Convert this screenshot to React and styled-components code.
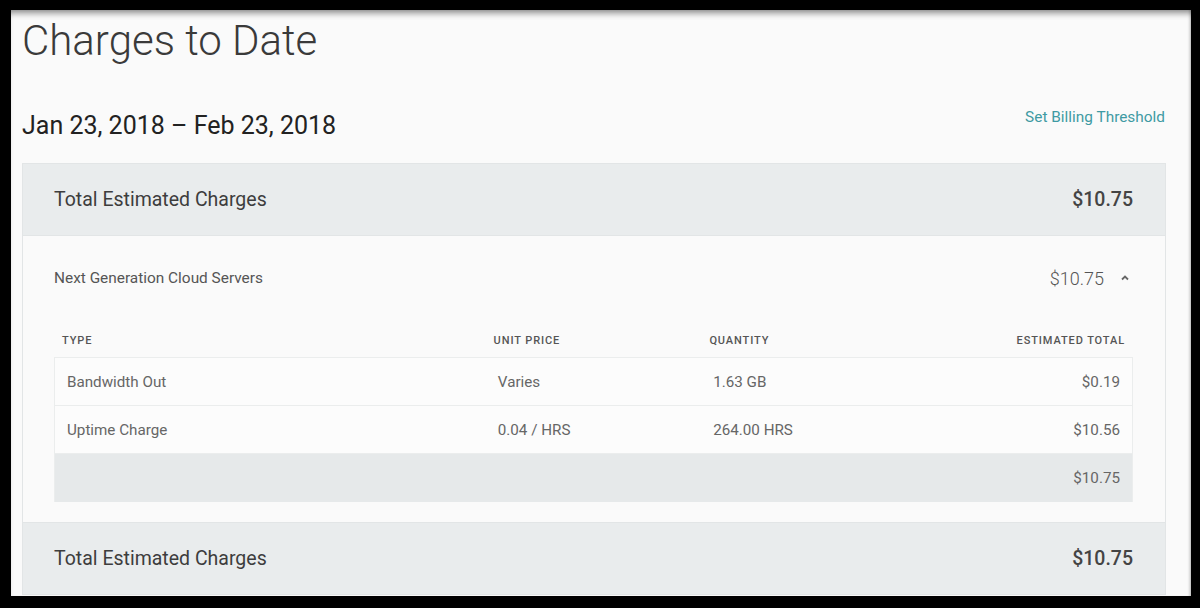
import React from "react";
import styled, { createGlobalStyle } from "styled-components";

const GlobalStyle = createGlobalStyle`
  html, body {
    margin: 0;
    padding: 0;
    background: #000;
    font-family: Roboto, "Liberation Sans", Arial, sans-serif;
  }
`;

const Frame = styled.div`
  height: 608px;
  box-sizing: border-box;
  padding: 10px 9px 12px 11px;
  background: #000;
`;

const Panel = styled.div`
  height: 100%;
  box-sizing: border-box;
  background: #fafafa;
  overflow: hidden;
  padding: 0 25px 0 11px;
  box-shadow: inset 0 7px 6px -4px rgba(0, 0, 0, 0.45), inset -3px 0 3px -2px rgba(0, 0, 0, 0.25);
`;

const Title = styled.h1`
  margin: 0;
  padding-top: 6px;
  font-size: 42px;
  line-height: 50px;
  font-weight: 300;
  color: #3a3a3a;
`;

const DateRow = styled.div`
  display: flex;
  justify-content: space-between;
  align-items: flex-start;
  margin-top: 45px;
  margin-right: 1px;
`;

const Period = styled.div`
  font-size: 25px;
  line-height: 30px;
  color: #222;
`;

const Link = styled.a`
  font-size: 15.4px;
  line-height: 18px;
  color: #3f9aa3;
  margin-top: -3px;
  cursor: pointer;
`;

const Card = styled.div`
  margin-top: 22px;
  border: 1px solid #e2e5e6;
  border-bottom: none;
`;

const Band = styled.div`
  display: flex;
  justify-content: space-between;
  align-items: center;
  height: 71px;
  padding: 0 32px 0 31px;
  background: #e9eced;
  border-bottom: 1px solid #e2e5e6;
  font-size: 19.5px;
  color: #3d3d3d;
`;

const BandTotal = styled.span`
  font-weight: 500;
  color: #444;
`;

const Section = styled.div`
  padding: 32px 32px 20px 31px;
  background: #fafafa;
  border-bottom: 1px solid #e2e5e6;
`;

const ServiceRow = styled.div`
  display: flex;
  justify-content: space-between;
  align-items: center;
  height: 20px;
  font-size: 15.4px;
  color: #555;
`;

const ServiceTotal = styled.div`
  display: flex;
  align-items: center;
  gap: 15px;
  font-size: 18px;
  font-weight: 300;
  color: #555;
`;

const Chevron = styled.svg`
  width: 12px;
  height: 12px;
  margin-right: 2px;
`;

const Table = styled.div`
  margin-top: 35px;
`;

const Row = styled.div`
  display: grid;
  grid-template-columns: 40% 20% 20% 20%;
  align-items: center;
  height: ${(p) => p.$h || 47}px;
  box-sizing: border-box;
  background: ${(p) => (p.$head ? "transparent" : p.$total ? "#e6e9ea" : "#fcfcfc")};
  border: ${(p) => (p.$head ? "none" : "1px solid #ebeded")};
  border-top: none;
  border-bottom: ${(p) => (p.$head ? "1px solid #ebeded" : p.$total ? "none" : "1px solid #ebeded")};
`;

const Cell = styled.div`
  padding: 0 ${(p) => (p.$head ? "8px" : "12px")};
  text-align: ${(p) => (p.$right ? "right" : "left")};
  font-size: ${(p) => (p.$head ? "11px" : "15.2px")};
  font-weight: ${(p) => (p.$head ? 500 : 400)};
  letter-spacing: ${(p) => (p.$head ? "0.9px" : "0")};
  text-transform: ${(p) => (p.$head ? "uppercase" : "none")};
  color: ${(p) => (p.$head ? "#555" : "#666")};
`;

const rows = [
  { type: "Bandwidth Out", price: "Varies", qty: "1.63 GB", total: "$0.19" },
  { type: "Uptime Charge", price: "0.04 / HRS", qty: "264.00 HRS", total: "$10.56" },
];

export default function App() {
  return (
    <>
      <GlobalStyle />
      <Frame>
        <Panel>
          <Title>Charges to Date</Title>
          <DateRow>
            <Period>Jan 23, 2018 – Feb 23, 2018</Period>
            <Link>Set Billing Threshold</Link>
          </DateRow>
          <Card>
            <Band>
              <span>Total Estimated Charges</span>
              <BandTotal>$10.75</BandTotal>
            </Band>
            <Section>
              <ServiceRow>
                <span>Next Generation Cloud Servers</span>
                <ServiceTotal>
                  $10.75
                  <Chevron viewBox="0 0 12 12" fill="none" stroke="#666" strokeWidth="1.8">
                    <path d="M3 7.5 L6 4.5 L9 7.5" />
                  </Chevron>
                </ServiceTotal>
              </ServiceRow>
              <Table>
                <Row $head $h={35}>
                  <Cell $head>Type</Cell>
                  <Cell $head>Unit Price</Cell>
                  <Cell $head>Quantity</Cell>
                  <Cell $head $right>Estimated Total</Cell>
                </Row>
                {rows.map((r) => (
                  <Row key={r.type} $h={48}>
                    <Cell>{r.type}</Cell>
                    <Cell>{r.price}</Cell>
                    <Cell>{r.qty}</Cell>
                    <Cell $right>{r.total}</Cell>
                  </Row>
                ))}
                <Row $total $h={48}>
                  <Cell />
                  <Cell />
                  <Cell />
                  <Cell $right>$10.75</Cell>
                </Row>
              </Table>
            </Section>
            <Band>
              <span>Total Estimated Charges</span>
              <BandTotal>$10.75</BandTotal>
            </Band>
          </Card>
        </Panel>
      </Frame>
    </>
  );
}
